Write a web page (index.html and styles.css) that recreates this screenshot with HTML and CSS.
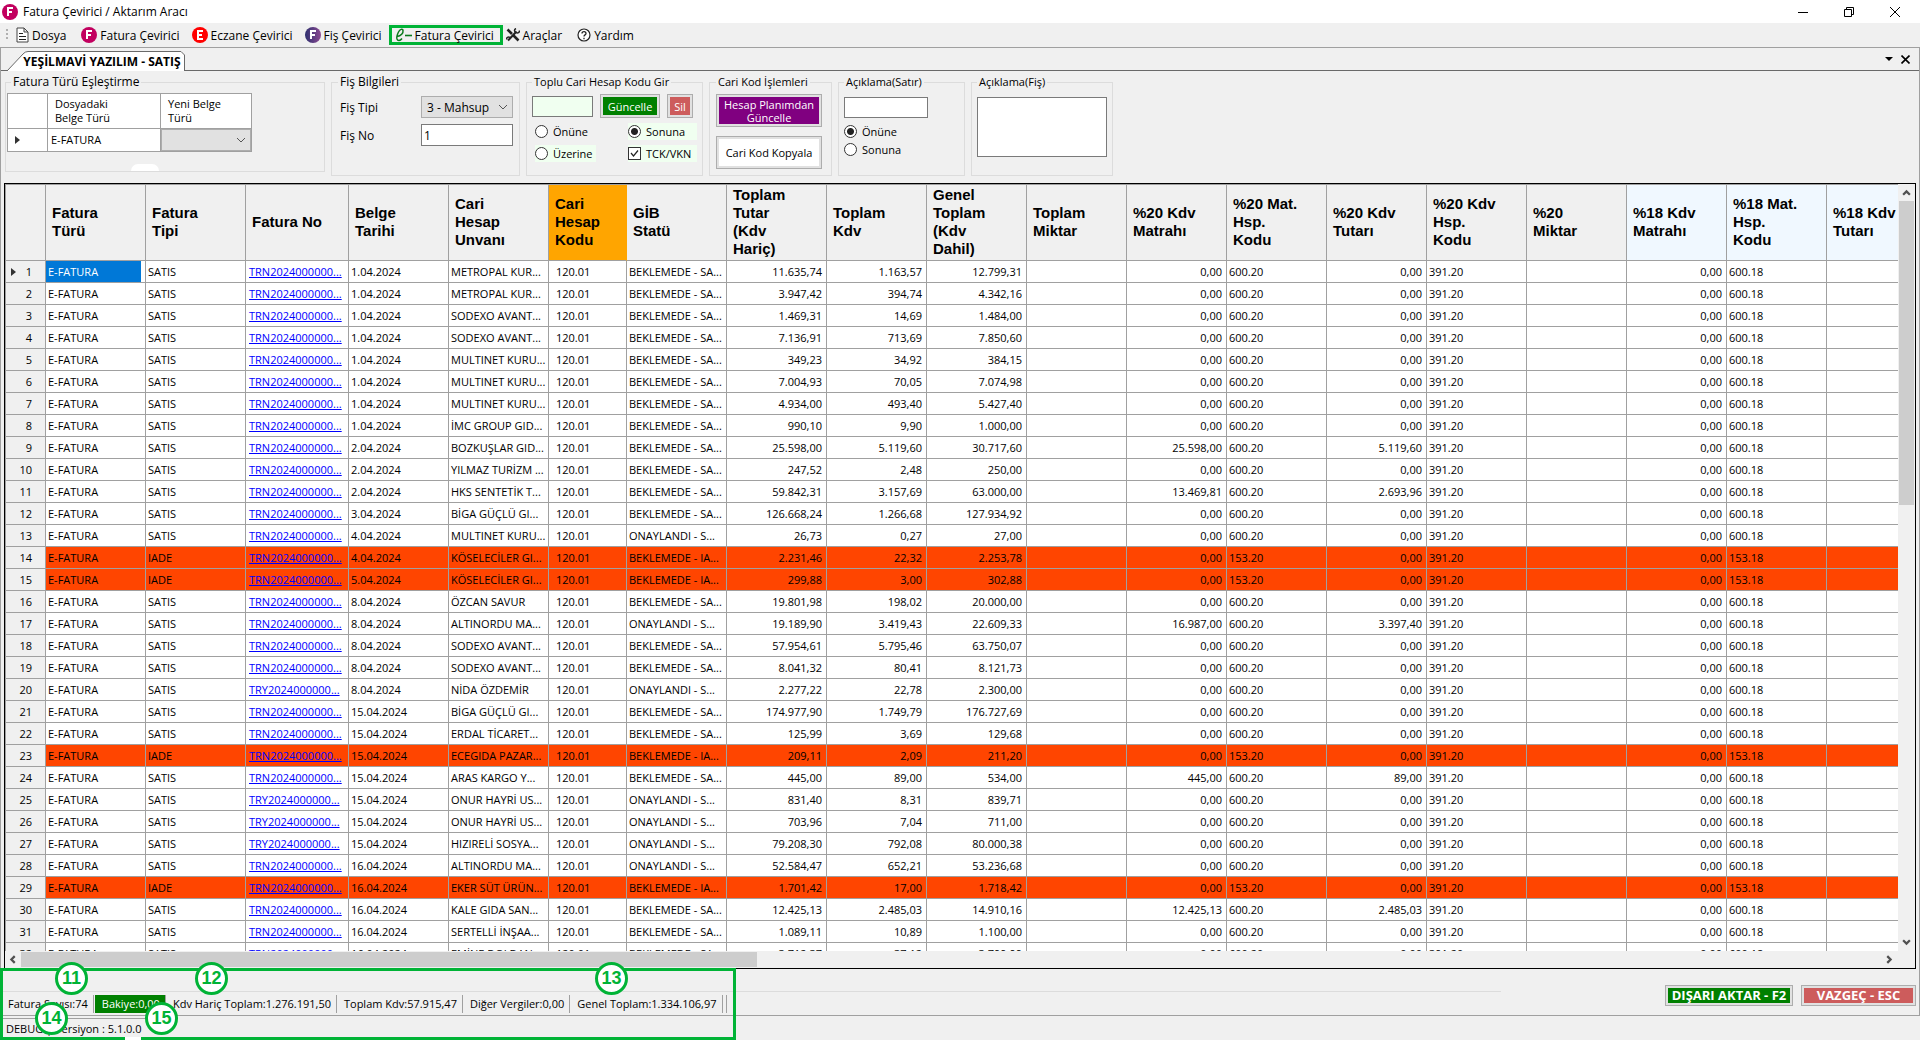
FILE: index.html
```
<!DOCTYPE html>
<html lang="tr">
<head>
    <meta charset="UTF-8">
    <meta name="viewport" content="width=device-width, initial-scale=1.0">
    <title>Fatura Çevirici / Aktarım Aracı</title>
    <link rel="stylesheet" href="styles.css">
</head>
<body>
    <header class="title-bar">
        <svg class="badge-icon" viewBox="0 0 16 16"><circle cx="8" cy="8" r="8" fill="#c2005f"/><path d="M6 12V4h5M6 8h4" fill="none" stroke="#fff" stroke-width="2"/></svg>
        <h1>Fatura Çevirici / Aktarım Aracı</h1>
        <div class="window-buttons">
            <button aria-label="Küçült"><svg width="10" height="10" viewBox="0 0 10 10"><path d="M0 5.500h10" stroke="#000"/></svg></button>
            <button aria-label="Önceki boyut"><svg width="10" height="10" viewBox="0 0 10 10"><path d="M.5 2.500h7v7h-7zM2.500 2.500v-2h7v7h-2" fill="none" stroke="#000"/></svg></button>
            <button aria-label="Kapat"><svg width="10" height="10" viewBox="0 0 10 10"><path d="M0 0l10 10M10 0L0 10" stroke="#000"/></svg></button>
        </div>
    </header>

    <nav class="toolbar">
        <span class="grip"></span>
        <button class="tool file">
            <svg width="13" height="16" viewBox="0 0 13 16"><path d="M1 1h7l4 4v10H1zM8 1v4h4" fill="#fff" stroke="#444"/><path d="M3 6.500h4M3 9.500h7M3 12.500h7" stroke="#222"/></svg>
            Dosya
        </button>
        <button class="tool invoice">
            <svg class="badge-icon" viewBox="0 0 16 16"><circle cx="8" cy="8" r="8" fill="#c2005f"/><path d="M6 12V4h5M6 8h4" fill="none" stroke="#fff" stroke-width="2"/></svg>
            Fatura Çevirici
        </button>
        <button class="tool pharmacy">
            <svg class="badge-icon" viewBox="0 0 16 16"><circle cx="8" cy="8" r="8" fill="#f00"/><path d="M11 4H6v8h5M6 8h4" fill="none" stroke="#fff" stroke-width="2"/></svg>
            Eczane Çevirici
        </button>
        <button class="tool slip">
            <svg class="badge-icon" viewBox="0 0 16 16"><defs><linearGradient id="slip"><stop offset="0" stop-color="#2d2f6e"/><stop offset="1" stop-color="#8c4a92"/></linearGradient></defs><circle cx="8" cy="8" r="8" fill="url(#slip)"/><path d="M6 12V4h5M6 8h4" fill="none" stroke="#fff" stroke-width="2"/></svg>
            Fiş Çevirici
        </button>
        <button class="tool einvoice">
            <svg width="17" height="14" viewBox="0 0 17 14"><path d="M2 8.500C6 8 8.500 5 8 2.500 7.600.5 5 1 3.500 4 2 7 1.500 9.500 2 11c.8 2.200 3 2 5-.5" fill="none" stroke="#0a7a1c" stroke-width="1.500"/><path d="M10 7.500h7" stroke="#0a7a1c" stroke-width="1.600"/></svg>
            Fatura Çevirici
        </button>
        <button class="tool tools">
            <svg width="14" height="14" viewBox="0 0 14 14"><path d="M1.500 1.500L6 6M7 7l5.500 5.500" stroke="#222" stroke-width="2.600"/><path d="M10.500 3.500L2 12.500" stroke="#222" stroke-width="2"/><path d="M10 .5c-2 1-2 3 0 4s3.500 0 3.500-2M4 9.500c-2-1-3.500 0-3.500 2" fill="none" stroke="#222" stroke-width="1.500"/></svg>
            Araçlar
        </button>
        <button class="tool help">
            <svg width="14" height="14" viewBox="0 0 14 14"><circle cx="7" cy="7" r="6" fill="#fff" stroke="#222" stroke-width="1.200"/><path d="M5 5.500C5 3 9 3 9 5.500 9 7 7 6.800 7 8.500M7 9.800v1.400" fill="none" stroke="#222" stroke-width="1.300"/></svg>
            Yardım
        </button>
    </nav>

    <main class="document">
        <div class="tab-strip">
            <button class="tab">
                <svg class="tab-shape" viewBox="0 0 178 20" preserveAspectRatio="none"><path d="M0 20L16 3Q18 .5 21 .5H174L177.500 4V20" fill="#fff" stroke="#696969"/></svg>
                <span>YEŞİLMAVİ YAZILIM - SATIŞ</span>
            </button>
            <div class="tab-actions">
                <button aria-label="Sekmeler"><svg width="8" height="4" viewBox="0 0 8 4"><path d="M0 0h8L4 4z"/></svg></button>
                <button aria-label="Sekmeyi kapat"><svg width="9" height="9" viewBox="0 0 9 9"><path d="M.5.5l8 8M8.500.5l-8 8" stroke="#000" stroke-width="1.600"/></svg></button>
            </div>
        </div>

        <form class="groups">
            <fieldset class="group mapping">
                <legend>Fatura Türü Eşleştirme</legend>
                <table class="mapping-table">
                    <thead>
                        <tr><th class="marker"></th><th class="from">Dosyadaki<br>Belge Türü</th><th class="to">Yeni Belge<br>Türü</th></tr>
                    </thead>
                    <tbody>
                        <tr>
                            <td><svg width="5" height="8" viewBox="0 0 5 8"><path d="M0 0l5 4-5 4z" fill="#333"/></svg></td>
                            <td>E-FATURA</td>
                            <td class="picker"><select aria-label="Yeni Belge Türü"><option></option></select></td>
                        </tr>
                    </tbody>
                </table>
                <span class="bump"></span>
            </fieldset>

            <fieldset class="group slip-info">
                <legend>Fiş Bilgileri</legend>
                <label for="slip-type">Fiş Tipi</label>
                <select id="slip-type"><option>3 - Mahsup</option></select>
                <label for="slip-no">Fiş No</label>
                <input type="text" id="slip-no" value="1">
            </fieldset>

            <fieldset class="group bulk-code">
                <legend>Toplu Cari Hesap Kodu Gir</legend>
                <div class="line">
                    <input type="text" class="mint code" aria-label="Cari hesap kodu">
                    <button type="button" class="framed green">Güncelle</button>
                    <button type="button" class="framed red">Sil</button>
                </div>
                <div class="options">
                    <label><input type="radio" name="code-place">Önüne</label>
                    <label class="mint"><input type="radio" name="code-place" checked>Sonuna</label>
                    <label class="mint"><input type="radio" name="code-place">Üzerine</label>
                    <label class="mint"><input type="checkbox" checked>TCK/VKN</label>
                </div>
            </fieldset>

            <fieldset class="group code-actions">
                <legend>Cari Kod İşlemleri</legend>
                <button type="button" class="framed purple">Hesap Planımdan<br>Güncelle</button>
                <button type="button" class="framed white">Cari Kod Kopyala</button>
            </fieldset>

            <fieldset class="group row-note">
                <legend>Açıklama(Satır)</legend>
                <input type="text" aria-label="Satır açıklaması">
                <label><input type="radio" name="note-place" checked>Önüne</label>
                <label><input type="radio" name="note-place">Sonuna</label>
            </fieldset>

            <fieldset class="group slip-note">
                <legend>Açıklama(Fiş)</legend>
                <textarea aria-label="Fiş açıklaması"></textarea>
            </fieldset>
        </form>

        <section class="grid">
            <div class="grid-body">
                <div class="grid-view">
                    <table class="invoices">
                        <colgroup>
                            <col class="w-head"><col><col><col class="w-no"><col><col><col class="w-code"><col>
                            <col><col><col><col><col><col><col><col><col><col><col><col>
                        </colgroup>
                        <thead>
                            <tr>
                                <th></th>
                                <th>Fatura<br>Türü</th>
                                <th>Fatura<br>Tipi</th>
                                <th>Fatura No</th>
                                <th>Belge<br>Tarihi</th>
                                <th>Cari<br>Hesap<br>Unvanı</th>
                                <th class="code-head">Cari<br>Hesap<br>Kodu</th>
                                <th>GİB<br>Statü</th>
                                <th>Toplam<br>Tutar<br>(Kdv<br>Hariç)</th>
                                <th>Toplam<br>Kdv</th>
                                <th>Genel<br>Toplam<br>(Kdv<br>Dahil)</th>
                                <th>Toplam<br>Miktar</th>
                                <th>%20 Kdv<br>Matrahı</th>
                                <th>%20 Mat.<br>Hsp.<br>Kodu</th>
                                <th>%20 Kdv<br>Tutarı</th>
                                <th>%20 Kdv<br>Hsp.<br>Kodu</th>
                                <th>%20<br>Miktar</th>
                                <th class="rate18">%18 Kdv<br>Matrahı</th>
                                <th class="rate18">%18 Mat.<br>Hsp.<br>Kodu</th>
                                <th class="rate18">%18 Kdv<br>Tutarı</th>
                            </tr>
                        </thead>
                        <tbody id="rows"></tbody>
                    </table>
                </div>
                <div class="scroll-y">
                    <svg viewBox="0 0 8 6"><path d="M1 5l3-3 3 3"/></svg>
                    <span class="thumb"></span>
                    <svg class="end" viewBox="0 0 8 6"><path d="M1 1l3 3 3-3"/></svg>
                </div>
            </div>
            <div class="scroll-x">
                <svg viewBox="0 0 6 8"><path d="M5 1L2 4l3 3"/></svg>
                <span class="thumb"></span>
                <svg class="end" viewBox="0 0 6 8"><path d="M1 1l3 3-3 3"/></svg>
            </div>
        </section>

        <footer class="totals-bar">
            <div class="totals">
                <span>Fatura Sayısı:74</span>
                <span class="balance">Bakiye:0,00</span>
                <span>Kdv Hariç Toplam:1.276.191,50</span>
                <span>Toplam Kdv:57.915,47</span>
                <span>Diğer Vergiler:0,00</span>
                <span>Genel Toplam:1.334.106,97</span>
                <span class="sizer"></span>
            </div>
            <div class="actions">
                <button class="framed green export">DIŞARI AKTAR - F2</button>
                <button class="framed red cancel">VAZGEÇ - ESC</button>
            </div>
        </footer>
    </main>

    <div class="status-bar"><span>DEBUG | Versiyon : 5.1.0.0</span></div>

    <!-- numbered callouts over the totals -->
    <div class="frame-mark">
        <span class="gap"></span>
        <b class="mark m11">11</b>
        <b class="mark m12">12</b>
        <b class="mark m13">13</b>
        <b class="mark m14">14</b>
        <b class="mark m15">15</b>
    </div>

    <script src="rows.js"></script>
</body>
</html>
```
FILE: styles.css
```
* {
    box-sizing: border-box;
}

body {
    margin: 0;
    height: 100vh;
    display: flex;
    flex-direction: column;
    position: relative;
    overflow: hidden;
    background-color: #f0f0f0;
    color: #000;
    font-family: "Open Sans", "Noto Sans", sans-serif;
    font-size: 11px;
}

button,
input,
select,
textarea {
    margin: 0;
    font-family: inherit;
    font-size: inherit;
    color: inherit;
}

button {
    padding: 0;
    border: none;
    background: none;
}

/* Title bar */
.title-bar {
    height: 23px;
    flex: none;
    display: flex;
    align-items: center;
    gap: 5px;
    padding: 0 2px;
    background-color: #fff;
}

.title-bar h1 {
    margin: 0;
    font-size: 12px;
    font-weight: normal;
}

.badge-icon {
    width: 16px;
    height: 16px;
    flex: none;
}

.window-buttons {
    margin-left: auto;
    display: flex;
}

.window-buttons button {
    width: 46px;
    height: 20px;
}

.window-buttons svg {
    display: block;
    margin: auto;
}

/* Toolbar */
.toolbar {
    height: 24px;
    flex: none;
    display: flex;
    align-items: center;
    gap: 12px;
    padding-left: 6px;
}

.grip {
    width: 2px;
    height: 12px;
    margin-right: -4px;
    background: repeating-linear-gradient(#b0b0b0 0 2px, transparent 2px 4px);
}

.tool {
    display: flex;
    align-items: center;
    gap: 3px;
    height: 20px;
    font-size: 12px;
    white-space: nowrap;
}

.invoice {
    margin-left: 3px;
}

.einvoice {
    border: 3px solid #00b336;
    width: 114px;
    margin-left: -5px;
    padding-left: 3px;
}

.tools {
    margin-left: -9px;
}

.help {
    margin-left: 3px;
}

/* Document */
.document {
    flex: 1;
    min-height: 0;
    display: flex;
    flex-direction: column;
    border: 1px solid #a0a0a0;
}

.tab-strip {
    height: 23px;
    flex: none;
    display: flex;
    align-items: flex-end;
    justify-content: space-between;
    padding-left: 6px;
    border-bottom: 1px solid #696969;
}

.tab {
    position: relative;
    width: 178px;
    height: 20px;
    margin-bottom: -1px;
    padding-left: 12px;
    font-size: 12px;
    font-weight: bold;
    white-space: nowrap;
}

.tab-shape {
    position: absolute;
    inset: 0;
    width: 100%;
    height: 100%;
}

.tab span {
    position: relative;
}

.tab-actions {
    display: flex;
    align-items: center;
    gap: 8px;
    height: 22px;
    padding-right: 9px;
}

.tab-actions svg {
    display: block;
}

/* Groups */
.groups {
    flex: none;
    display: flex;
    align-items: flex-start;
    gap: 6px;
    padding: 3px 4px 7px;
}

.group {
    height: 102px;
    margin: 0;
    padding: 2px 5px;
    border: 1px solid #dcdcdc;
    min-width: 0;
}

.group legend {
    height: 16px;
    padding: 0 2px;
    line-height: 16px;
    white-space: nowrap;
}

.group input[type="text"],
.group textarea {
    height: 21px;
    padding: 0 2px;
    border: 1px solid #7a7a7a;
    border-radius: 0;
    background-color: #fff;
    outline: none;
}

.group select {
    appearance: none;
    height: 22px;
    padding: 0 5px;
    border: 1px solid #adadad;
    border-radius: 0;
    background: #e1e1e1 url("data:image/svg+xml,%3Csvg xmlns='http://www.w3.org/2000/svg' width='8' height='5'%3E%3Cpath d='M0 0l4 4 4-4' fill='none' stroke='%23555'/%3E%3C/svg%3E") no-repeat right 5px center;
}

.group label {
    display: flex;
    align-items: center;
    gap: 5px;
    white-space: nowrap;
}

.group input[type="radio"],
.group input[type="checkbox"] {
    appearance: none;
    width: 13px;
    height: 13px;
    border: 1px solid #333;
    background-color: #fff;
}

.group input[type="radio"] {
    border-radius: 50%;
}

.group input[type="radio"]:checked {
    background: radial-gradient(circle, #222 0 3px, #fff 4px);
}

.group input[type="checkbox"]:checked {
    background: #fff url("data:image/svg+xml,%3Csvg xmlns='http://www.w3.org/2000/svg' width='11' height='11'%3E%3Cpath d='M2 5l2.500 3L9 2.500' fill='none' stroke='%23222' stroke-width='1.200'/%3E%3C/svg%3E");
}

.group .mint,
.group input.mint {
    background-color: #f0fff0;
}

.framed {
    border: 1px solid #adadad;
    outline: 2px solid #e1e1e1;
    outline-offset: -3px;
    line-height: 13px;
    white-space: nowrap;
}

.green {
    background-color: #008000;
    color: #fff;
}

.red {
    background-color: #cd5c5c;
    color: #fff;
}

.purple {
    background-color: #800080;
    color: #fff;
}

.white {
    background-color: #fff;
}

.mapping {
    position: relative;
    width: 320px;
    height: 98px;
    padding: 3px 1px;
    font-size: 12px;
}

.mapping legend {
    margin-left: 4px;
}

.mapping-table {
    border-collapse: collapse;
    table-layout: fixed;
    width: 245px;
    background-color: #fff;
    font-size: 11px;
}

.mapping-table th,
.mapping-table td {
    height: 22px;
    padding: 0 3px;
    border: 1px solid #a0a0a0;
    line-height: 14px;
    text-align: left;
}

.mapping-table th {
    height: 35px;
    padding-left: 7px;
    font-weight: normal;
}

.mapping-table .marker {
    width: 40px;
}

.mapping-table .from {
    width: 113px;
}

.mapping-table td:first-child {
    padding-left: 7px;
}

.mapping-table .picker {
    padding: 0;
}

.mapping-table select {
    display: block;
    width: 100%;
}

/* white bump at the bottom edge of the group */
.bump {
    position: absolute;
    left: 125px;
    bottom: 0;
    width: 28px;
    height: 7px;
    border-radius: 14px 14px 0 0;
    background-color: #fff;
}

.slip-info {
    width: 189px;
    display: grid;
    grid-template-columns: 1fr 92px;
    grid-auto-rows: 22px;
    row-gap: 6px;
    padding: 6px 6px;
    font-size: 12px;
}

.slip-info label {
    padding-left: 2px;
}

.group.slip-info input[type="text"] {
    height: 22px;
}

.bulk-code {
    width: 177px;
}

.line {
    display: flex;
    align-items: center;
    gap: 7px;
    margin-top: 2px;
}

.line .code {
    width: 61px;
}

.line .framed {
    height: 24px;
    width: 60px;
}

.line .red {
    width: 26px;
}

.options {
    display: grid;
    grid-template-columns: 61px 69px;
    grid-auto-rows: 17px;
    column-gap: 32px;
    row-gap: 5px;
    justify-content: start;
    padding: 5px 3px;
}

.code-actions {
    width: 123px;
    padding-left: 6px;
}

.code-actions .framed {
    display: block;
    width: 106px;
    height: 33px;
    margin: 2px 0 9px;
}

.row-note {
    width: 127px;
}

.row-note input[type="text"] {
    display: block;
    width: 84px;
    margin: 5px 0 4px;
}

.row-note label {
    height: 18px;
}

.slip-note {
    width: 142px;
}

.group.slip-note textarea {
    display: block;
    width: 130px;
    height: 60px;
    margin-top: 5px;
    resize: none;
}

/* Invoice grid */
.grid {
    flex: 1;
    min-height: 0;
    display: flex;
    flex-direction: column;
    margin: 0 3px;
    border: 1px solid #000;
}

.grid-body {
    flex: 1;
    min-height: 0;
    display: flex;
}

.grid-view {
    flex: 1;
    min-width: 0;
    overflow: hidden;
    border: 1px solid #a0a0a0;
    border-width: 1px 0 0 1px;
    background-color: #fff;
}

.invoices {
    width: 1921px;
    table-layout: fixed;
    border-collapse: separate;
    border-spacing: 0;
}

.invoices .w-head {
    width: 40px;
}

.invoices .w-no {
    width: 103px;
}

.invoices .w-code {
    width: 78px;
}

.invoices th,
.invoices td {
    height: 22px;
    padding: 0 2px;
    border: 1px solid #a0a0a0;
    border-width: 0 1px 1px 0;
    line-height: 18px;
    text-align: left;
    white-space: nowrap;
    overflow: hidden;
}

.invoices thead th {
    height: 76px;
    padding: 0 6px 2px;
    background-color: #f0f0f0;
    font-family: "Liberation Sans", Arial, sans-serif;
    font-size: 15px;
}

.invoices thead .code-head {
    background-color: #ffa500;
    border-right-color: #ffa500;
}

.invoices thead .rate18 {
    background-color: #f0f8ff;
}

.invoices tbody th {
    padding-right: 13px;
    background-color: #f0f0f0;
    font-weight: normal;
    text-align: right;
}

.invoices tbody .current::before {
    content: "";
    float: left;
    margin: 5px 0 0 3px;
    border: 4px solid transparent;
    border-left: 5px solid #333;
    border-right: none;
}

.invoices .num {
    padding-right: 4px;
    text-align: right;
}

.invoices .code {
    padding-left: 7px;
}

.invoices .number {
    padding-left: 3px;
}

.invoices a {
    color: #00f;
}

.invoices .return td {
    background-color: #ff4500;
}

.invoices .selected {
    background-color: #0078d7;
    box-shadow: inset -4px 0 #fff;
    color: #fff;
}

.scroll-y,
.scroll-x {
    flex: none;
    display: flex;
    align-items: center;
    background-color: #f0f0f0;
}

.scroll-y {
    width: 17px;
    flex-direction: column;
    padding: 4px 0;
    gap: 4px;
}

.scroll-x {
    height: 17px;
    padding: 0 21px 0 3px;
    gap: 4px;
}

.scroll-y svg,
.scroll-x svg {
    width: 9px;
    height: 9px;
    flex: none;
    fill: none;
    stroke: #505050;
    stroke-width: 2;
}

.scroll-y .thumb {
    width: 15px;
    height: 40%;
    background-color: #cdcdcd;
}

.scroll-x .thumb {
    width: 39%;
    height: 15px;
    background-color: #cdcdcd;
}

.scroll-y .end {
    margin-top: auto;
}

.scroll-x .end {
    margin-left: auto;
}

/* Totals */
.totals-bar {
    flex: none;
    height: 46px;
    display: flex;
    align-items: flex-end;
    justify-content: space-between;
    padding: 0 3px 2px 0;
}

.totals {
    flex: 0 1 1500px;
    display: flex;
    padding-top: 3px;
    border-top: 1px solid #dcdcdc;
    line-height: 18px;
    white-space: nowrap;
}

.totals span {
    padding: 0 5px 0 7px;
    border-right: 1px solid #a0a0a0;
}

.totals .balance {
    margin-left: 1px;
    background-color: #008000;
    color: #fff;
}

.totals .sizer {
    padding: 0 3px 0 0;
}

.actions {
    display: flex;
    gap: 8px;
    margin-bottom: 7px;
}

.actions .framed {
    width: 128px;
    height: 21px;
    font-size: 13px;
    font-weight: bold;
}

.actions .cancel {
    width: 115px;
}

.status-bar {
    flex: none;
    height: 24px;
    padding-top: 2px;
    line-height: 20px;
}

.status-bar span {
    display: inline-block;
    padding: 0 4px 0 6px;
    border-top: 1px solid #a0a0a0;
}

/* Callouts */
.frame-mark {
    position: absolute;
    left: 0;
    bottom: 0;
    width: 736px;
    height: 72px;
    border: 3px solid #00b336;
    pointer-events: none;
}

.gap {
    position: absolute;
    left: 122px;
    bottom: -3px;
    width: 16px;
    height: 3px;
    background-color: #fff;
}

.mark {
    position: absolute;
    width: 33px;
    height: 33px;
    border: 3px solid #00b336;
    border-radius: 50%;
    background-color: #fff;
    color: #00b336;
    font-family: "Liberation Sans", Arial, sans-serif;
    font-size: 18px;
    line-height: 27px;
    text-align: center;
}

.m11 {
    left: 52px;
    top: -9px;
}

.m12 {
    left: 192px;
    top: -9px;
}

.m13 {
    left: 592px;
    top: -9px;
}

.m14 {
    left: 32px;
    top: 31px;
}

.m15 {
    left: 142px;
    top: 31px;
}
```
FILE: rows.js
```
// day, unvan, tutar, kdv, genel toplam, then options
const invoices = [
    ['1.04', 'METROPAL KUR...', '11.635,74', '1.163,57', '12.799,31'],
    ['1.04', 'METROPAL KUR...', '3.947,42', '394,74', '4.342,16'],
    ['1.04', 'SODEXO AVANT...', '1.469,31', '14,69', '1.484,00'],
    ['1.04', 'SODEXO AVANT...', '7.136,91', '713,69', '7.850,60'],
    ['1.04', 'MULTINET KURU...', '349,23', '34,92', '384,15'],
    ['1.04', 'MULTINET KURU...', '7.004,93', '70,05', '7.074,98'],
    ['1.04', 'MULTINET KURU...', '4.934,00', '493,40', '5.427,40'],
    ['1.04', 'İMC GROUP GID...', '990,10', '9,90', '1.000,00'],
    ['2.04', 'BOZKUŞLAR GID...', '25.598,00', '5.119,60', '30.717,60', { base: '25.598,00', vat: '5.119,60' }],
    ['2.04', 'YILMAZ TURİZM ...', '247,52', '2,48', '250,00'],
    ['2.04', 'HKS SENTETİK T...', '59.842,31', '3.157,69', '63.000,00', { base: '13.469,81', vat: '2.693,96' }],
    ['3.04', 'BİGA GÜÇLÜ GI...', '126.668,24', '1.266,68', '127.934,92'],
    ['4.04', 'MULTINET KURU...', '26,73', '0,27', '27,00', { approved: true }],
    ['4.04', 'KÖSELECİLER GI...', '2.231,46', '22,32', '2.253,78', { iade: true }],
    ['5.04', 'KÖSELECİLER GI...', '299,88', '3,00', '302,88', { iade: true }],
    ['8.04', 'ÖZCAN SAVUR', '19.801,98', '198,02', '20.000,00'],
    ['8.04', 'ALTINORDU MA...', '19.189,90', '3.419,43', '22.609,33', { approved: true, base: '16.987,00', vat: '3.397,40' }],
    ['8.04', 'SODEXO AVANT...', '57.954,61', '5.795,46', '63.750,07'],
    ['8.04', 'SODEXO AVANT...', '8.041,32', '80,41', '8.121,73'],
    ['8.04', 'NİDA ÖZDEMİR', '2.277,22', '22,78', '2.300,00', { approved: true, serial: 'TRY' }],
    ['15.04', 'BİGA GÜÇLÜ GI...', '174.977,90', '1.749,79', '176.727,69'],
    ['15.04', 'ERDAL TİCARET...', '125,99', '3,69', '129,68'],
    ['15.04', 'ECEGIDA PAZAR...', '209,11', '2,09', '211,20', { iade: true }],
    ['15.04', 'ARAS KARGO Y...', '445,00', '89,00', '534,00', { base: '445,00', vat: '89,00' }],
    ['15.04', 'ONUR HAYRİ US...', '831,40', '8,31', '839,71', { approved: true, serial: 'TRY' }],
    ['15.04', 'ONUR HAYRİ US...', '703,96', '7,04', '711,00', { approved: true, serial: 'TRY' }],
    ['15.04', 'HIZIRELİ SOSYA...', '79.208,30', '792,08', '80.000,38', { approved: true, serial: 'TRY' }],
    ['16.04', 'ALTINORDU MA...', '52.584,47', '652,21', '53.236,68', { approved: true }],
    ['16.04', 'EKER SÜT ÜRÜN...', '1.701,42', '17,00', '1.718,42', { iade: true }],
    ['16.04', 'KALE GIDA SAN...', '12.425,13', '2.485,03', '14.910,16', { base: '12.425,13', vat: '2.485,03' }],
    ['16.04', 'SERTELLİ İNŞAA...', '1.089,11', '10,89', '1.100,00'],
    ['16.04', 'EMİNE DOLDAN...', '3.712,37', '37,12', '3.799,99']
];

document.getElementById('rows').innerHTML = invoices.map(function (row, i) {
    const o = row[5] || {};
    const account = o.iade ? '153' : '600';
    const status = o.approved ? 'ONAYLANDI - S...' : 'BEKLEMEDE - ' + (o.iade ? 'IA...' : 'SA...');
    return `<tr class="${o.iade ? 'return' : ''}">
        <th class="${i === 0 ? 'current' : ''}">${i + 1}</th>
        <td class="${i === 0 ? 'selected' : ''}">E-FATURA</td>
        <td>${o.iade ? 'IADE' : 'SATIS'}</td>
        <td class="number"><a href="#">${o.serial || 'TRN'}2024000000...</a></td>
        <td>${row[0]}.2024</td>
        <td>${row[1]}</td>
        <td class="code">120.01</td>
        <td>${status}</td>
        <td class="num">${row[2]}</td>
        <td class="num">${row[3]}</td>
        <td class="num">${row[4]}</td>
        <td></td>
        <td class="num">${o.base || '0,00'}</td>
        <td>${account}.20</td>
        <td class="num">${o.vat || '0,00'}</td>
        <td>391.20</td>
        <td></td>
        <td class="num">0,00</td>
        <td>${account}.18</td>
        <td></td>
    </tr>`;
}).join('');
```
